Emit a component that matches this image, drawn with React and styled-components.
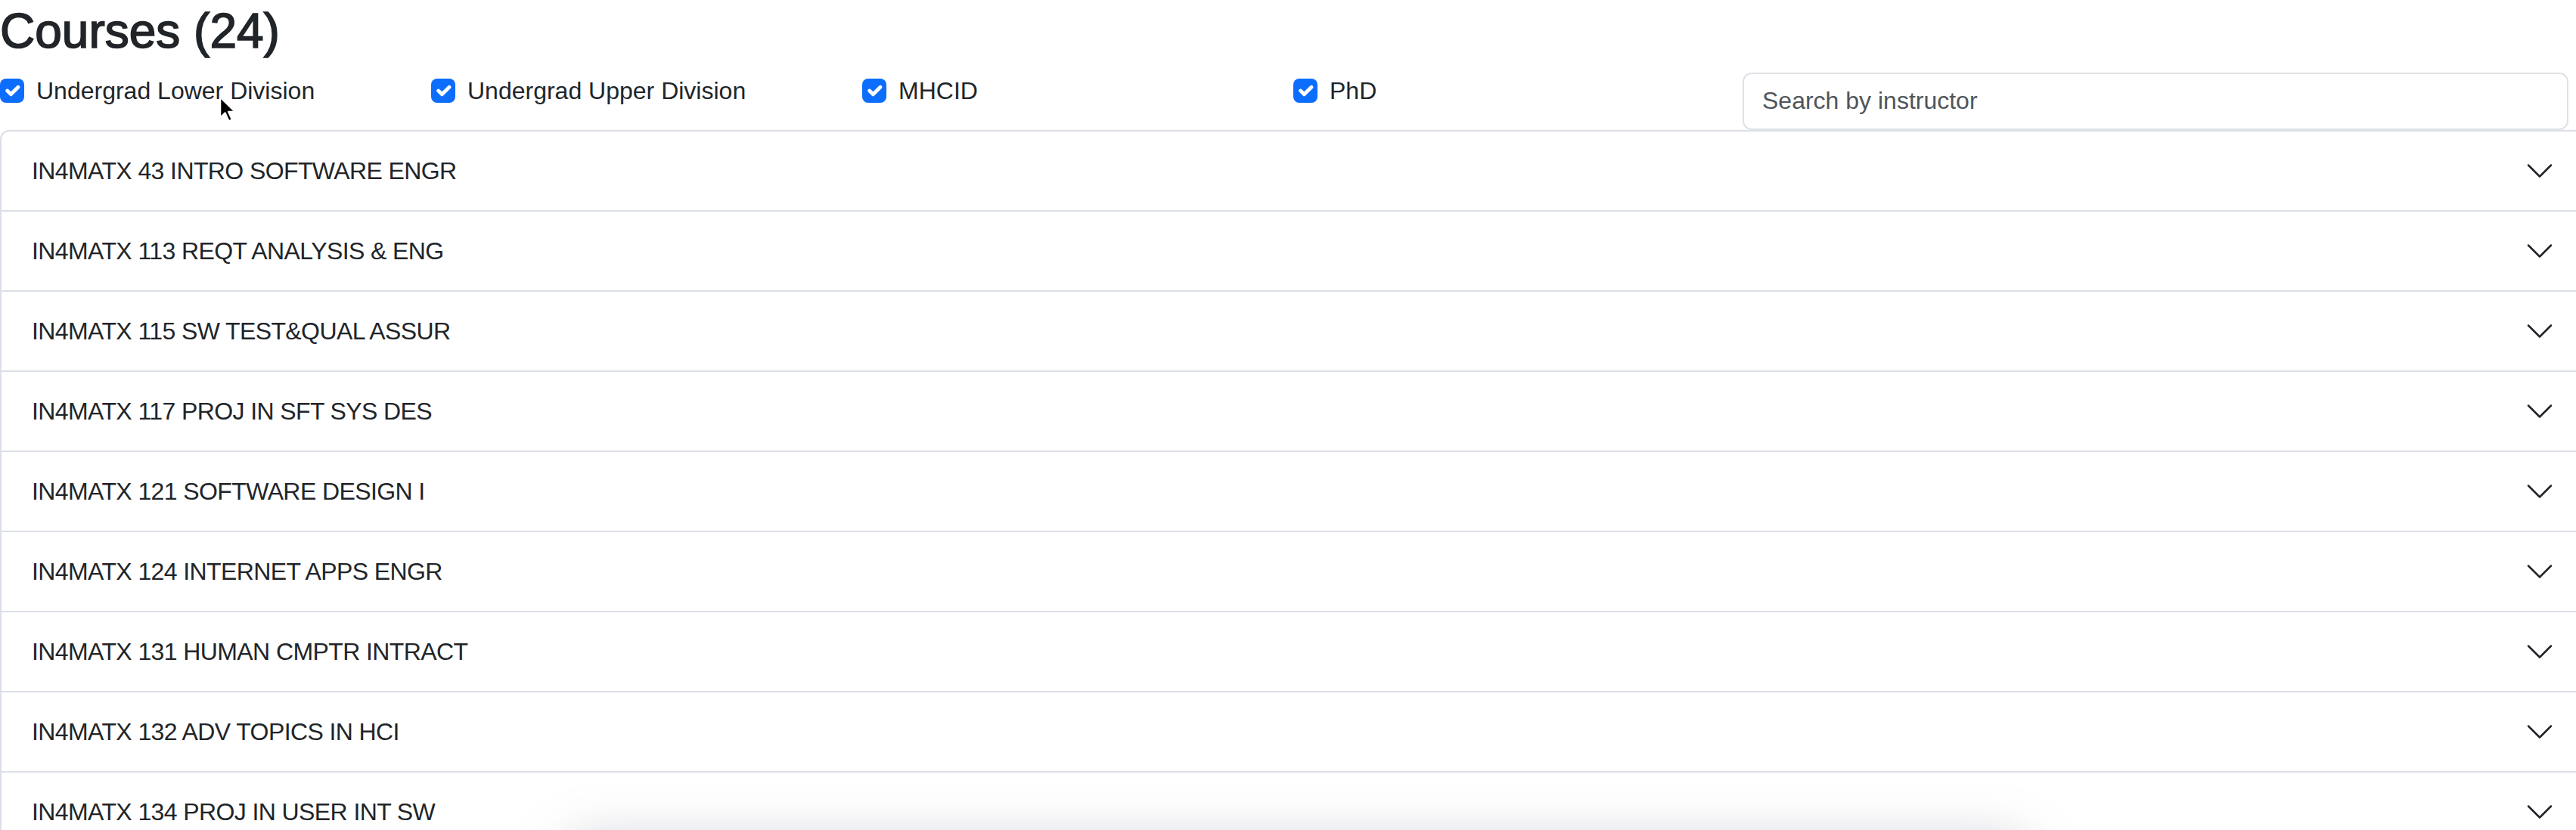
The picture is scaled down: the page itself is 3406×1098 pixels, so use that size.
import React from "react";
import styled, { createGlobalStyle } from "styled-components";

const GlobalStyle = createGlobalStyle`
    html, body {
        margin: 0;
        padding: 0;
        overflow: hidden;
        background: #ffffff;
    }
    body {
        font-family: "Liberation Sans", Arial, sans-serif;
        color: #212529;
    }
`;

const Page = styled.div`
    position: relative;
    width: 3420px;
    height: 1098px;
    padding-top: 3px;
    box-sizing: border-box;
    overflow: hidden;
`;

const Title = styled.h2`
    margin: 0 0 16px;
    font-size: 64px;
    font-weight: 500;
    line-height: 1.2;
    -webkit-text-stroke: 1.6px #212529;
`;

const FilterRow = styled.div`
    display: grid;
    grid-template-columns: repeat(6, 570px);
    align-items: start;
`;

const CheckLabel = styled.label`
    display: flex;
    align-items: flex-start;
    gap: 16px;
    font-size: 32px;
    line-height: 48px;
    cursor: pointer;
`;

const CheckBox = styled.span`
    flex: none;
    display: flex;
    align-items: center;
    justify-content: center;
    width: 32px;
    height: 32px;
    margin-top: 8px;
    border-radius: 8px;
    background: #0d6efd;
`;

const SearchCell = styled.div`
    grid-column: span 2;
    padding: 0 24px;
`;

const SearchInput = styled.input`
    display: block;
    box-sizing: border-box;
    width: 100%;
    height: 76px;
    padding: 12px 24px;
    border: 2px solid #dee2e6;
    border-radius: 12px;
    font-family: inherit;
    font-size: 32px;
    line-height: 48px;
    color: #212529;
    background: #ffffff;
    outline: none;

    &::placeholder {
        color: #4f555b;
    }
`;

const Accordion = styled.div`
    display: flex;
    flex-direction: column;
`;

const Item = styled.div`
    border: 2px solid #dbdfe7;
    border-top-width: ${(p) => (p.$first ? "2px" : "0")};
    border-radius: ${(p) => (p.$first ? "12px 12px 0 0" : "0")};
    background: #ffffff;
`;

const ItemButton = styled.button`
    display: flex;
    align-items: center;
    width: 100%;
    padding: 32px 40px 32px 40px;
    border: 0;
    background: transparent;
    font-family: inherit;
    font-size: 32px;
    line-height: 40px;
    letter-spacing: -0.6px;
    color: #212529;
    text-align: left;
    cursor: pointer;
`;

const ItemName = styled.span`
    flex: 1;
`;

const Chevron = styled.svg`
    flex: none;
    width: 40px;
    height: 40px;
`;

const BottomShade = styled.div`
    position: absolute;
    left: 760px;
    width: 1910px;
    top: 1130px;
    height: 80px;
    border-radius: 40px;
    background: #d9dbe0;
    box-shadow: 0 0 60px 30px rgba(150, 155, 165, 0.35);
`;

const Cursor = styled.svg`
    position: absolute;
    left: 289px;
    top: 126px;
    width: 26px;
    height: 38px;
`;

const filters = [
    "Undergrad Lower Division",
    "Undergrad Upper Division",
    "MHCID",
    "PhD",
];

const courses = [
    "IN4MATX 43 INTRO SOFTWARE ENGR",
    "IN4MATX 113 REQT ANALYSIS & ENG",
    "IN4MATX 115 SW TEST&QUAL ASSUR",
    "IN4MATX 117 PROJ IN SFT SYS DES",
    "IN4MATX 121 SOFTWARE DESIGN I",
    "IN4MATX 124 INTERNET APPS ENGR",
    "IN4MATX 131 HUMAN CMPTR INTRACT",
    "IN4MATX 132 ADV TOPICS IN HCI",
    "IN4MATX 134 PROJ IN USER INT SW",
];

function Check() {
    return (
        <CheckBox>
            <svg width="32" height="32" viewBox="0 0 20 20">
                <path d="m6 10 3 3 6-6" fill="none" stroke="#fff" strokeWidth="3" strokeLinecap="round" strokeLinejoin="round" />
            </svg>
        </CheckBox>
    );
}

export default function App() {
    return (
        <Page>
            <GlobalStyle />
            <Title>Courses (24)</Title>

            <FilterRow>
                {filters.map((f) => (
                    <CheckLabel key={f}>
                        <Check />
                        {f}
                    </CheckLabel>
                ))}
                <SearchCell>
                    <SearchInput type="text" placeholder="Search by instructor" />
                </SearchCell>
            </FilterRow>

            <Accordion>
                {courses.map((c, i) => (
                    <Item key={c} $first={i === 0}>
                        <ItemButton type="button">
                            <ItemName>{c}</ItemName>
                            <Chevron viewBox="0 0 16 16" fill="none" stroke="#212529" strokeLinecap="round" strokeLinejoin="round">
                                <path d="M2 5L8 11L14 5" />
                            </Chevron>
                        </ItemButton>
                    </Item>
                ))}
            </Accordion>

            <BottomShade />

            <Cursor viewBox="0 0 24 34">
                <path d="M2 2 L2 27 L8 21 L12.5 31 L16.5 29.2 L12 19.5 L20 19.5 Z" fill="#000" stroke="#fff" strokeWidth="2" strokeLinejoin="round" />
            </Cursor>
        </Page>
    );
}
